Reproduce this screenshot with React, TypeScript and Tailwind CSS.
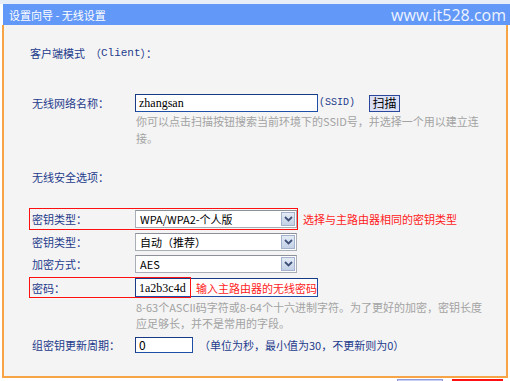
import type { ReactNode } from "react";

// Wizard screen: wireless client settings (router admin page)

const navy = "text-[#1e3b8c]";

function Label({ children }: { children: ReactNode }) {
  return <span className={`w-[105px] shrink-0 pl-[2px] ${navy}`}>{children}</span>;
}

function Chevron() {
  return (
    <svg width="9" height="6" viewBox="0 0 9 6">
      <path d="M1 1 L4.5 4.5 L8 1" fill="none" stroke="#3f5179" strokeWidth="1.8" />
    </svg>
  );
}

function Select({ value }: { value: string }) {
  return (
    <div className="flex h-full w-[162px] border border-[#a9aeb6] border-t-[#8d929a] bg-white">
      <span className="flex flex-1 items-center pl-[4px] text-black">{value}</span>
      <span className="m-[1px] flex w-[14px] items-center justify-center border border-[#a2b2cc] bg-gradient-to-b from-[#e4ebf6] to-[#c3d0e6]">
        <Chevron />
      </span>
    </div>
  );
}

function TextBox({ width, children }: { width: string; children: ReactNode }) {
  return (
    <div
      className={`flex h-full items-center border border-[#1f4ea6] border-t-[#173c85] border-l-[#173c85] bg-white pl-[3px] ${width}`}
    >
      {children}
    </div>
  );
}

export default function App() {
  return (
    <div className="flex h-[381px] w-[510px] flex-col overflow-hidden bg-white font-['Noto_Sans_CJK_SC','Liberation_Sans',sans-serif] text-[11px] leading-[14px]">
      {/* top strip + title bar */}
      <div className="h-[4px] shrink-0 bg-[#e8eef8]" />
      <div className="ml-[3px] flex h-[21px] shrink-0 items-center justify-between bg-[#6298f7] pl-[6px] pr-[4px] text-white">
        <span>设置向导 - 无线设置</span>
        <span className="font-['Open_Sans',sans-serif] text-[16px] leading-[20px] text-[#eef3ff]">www.it528.com</span>
      </div>

      {/* panel */}
      <div className="ml-[2px] flex h-[353px] w-[506px] shrink-0 flex-col border-x-2 border-b-2 border-[#f6a445] bg-[#f4f4f4] pl-[25px]">
        <div className={`mt-[20px] flex h-[16px] items-center pl-[1px] ${navy}`}>
          客户端模式&nbsp;&nbsp;（<span className="font-['Liberation_Mono',monospace]">Client</span>）：
        </div>

        {/* SSID */}
        <div className="mt-[33px] flex h-[18px] items-center">
          <span className="w-[1px]" />
          <Label>无线网络名称：</Label>
          <TextBox width="w-[183px]">
            <span className="font-['Liberation_Serif',serif] text-[12px] text-black">zhangsan</span>
          </TextBox>
          <span className={`ml-[1px] font-['Liberation_Mono',monospace] text-[10px] ${navy}`}>(SSID)</span>
          <button className="ml-[14px] flex h-[17px] w-[31px] items-center justify-center border border-[#2a479b] bg-[#dce0f4] text-[12px] text-black">
            扫描
          </button>
        </div>
        <div className="ml-[107px] mt-[1px] w-[360px] leading-[17px] text-[#a3a3a3]">
          你可以点击扫描按钮搜索当前环境下的SSID号，并选择一个用以建立连
          <br />
          接。
        </div>

        <div className={`mt-[22px] flex h-[16px] items-center pl-[3px] ${navy}`}>无线安全选项：</div>

        {/* key type (highlighted) */}
        <div className="mt-[23px] flex h-[22px] items-center">
          <div className="flex h-full items-center border border-[#ff1010] py-px">
            <Label>密钥类型：</Label>
            <Select value="WPA/WPA2-个人版" />
          </div>
          <span className="ml-[5px] text-[#ff1a1a]">选择与主路由器相同的密钥类型</span>
        </div>
        <div className="mt-[2px] flex h-[20px] items-center border border-transparent">
          <Label>密钥类型：</Label>
          <Select value="自动（推荐）" />
        </div>
        <div className="mt-[2px] flex h-[20px] items-center border border-transparent">
          <Label>加密方式：</Label>
          <Select value="AES" />
        </div>

        {/* password */}
        <div className="relative mt-[3px] flex h-[21px] items-center border border-transparent">
          <Label>密码：</Label>
          <TextBox width="w-[183px]">
            <span className="w-[57px] font-['Liberation_Serif',serif] text-[12px] text-black">1a2b3c4d</span>
            <span className="text-[#ff1a1a]">输入主路由器的无线密码</span>
          </TextBox>
          <div className="absolute -left-px -top-px h-[21px] w-[162px] border border-[#ff1010]" />
        </div>
        <div className="ml-[107px] mt-[1px] w-[370px] leading-[16px] text-[#a3a3a3]">
          8-63个ASCII码字符或8-64个十六进制字符。为了更好的加密，密钥长度
          <br />
          应足够长，并不是常用的字段。
        </div>

        {/* group key interval */}
        <div className="mt-[5px] flex h-[18px] items-center border border-transparent">
          <Label>组密钥更新周期：</Label>
          <TextBox width="w-[58px]">
            <span className="text-[12px] text-black">0</span>
          </TextBox>
          <span className={`ml-[6px] ${navy}`}>（单位为秒，最小值为30，不更新则为0）</span>
        </div>
      </div>

      {/* bottom buttons (cut off) */}
      <div className="flex h-[10px] shrink-0 justify-end gap-[9px] pr-[7px] pt-[1px]">
        <div className="h-[12px] w-[46px] border border-[#8e9bd4] bg-[#c9cff0]" />
        <div className="h-[12px] w-[51px] border-2 border-[#ff1010] bg-[#e9a6b6]" />
      </div>
    </div>
  );
}
